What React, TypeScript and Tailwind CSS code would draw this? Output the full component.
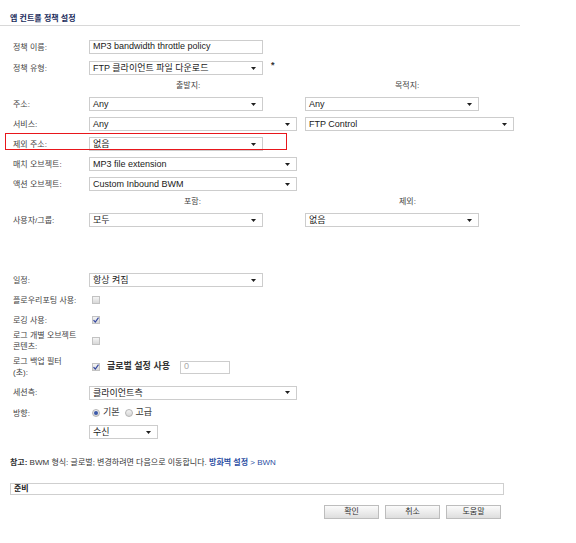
import React from 'react';

const FONT = "font-['Liberation_Sans','Noto_Sans_CJK_KR',sans-serif]";

function Arrow() {
    return (
        <svg width="5" height="3" viewBox="0 0 5 3" className="shrink-0">
            <path d="M0 0h5L2.5 3z" fill="#1f1f1f" />
        </svg>
    );
}

function Select({ value, w }: { value: string; w: string }) {
    return (
        <div className={`${w} h-[14px] shrink-0 border border-[#cdcdcd] bg-white flex items-center justify-between pl-[3px] pr-[6px]`}>
            <span className="text-[9px] leading-[12px] text-[#1a1a1a] whitespace-nowrap">{value}</span>
            <Arrow />
        </div>
    );
}

function Check({ on }: { on?: boolean }) {
    return (
        <div className="ml-[3px] w-[8px] h-[8px] shrink-0 border border-[#c2c2c2] bg-gradient-to-b from-[#f5f5f5] to-[#d8d8d8] flex items-center justify-center">
            {on && (
                <svg width="6" height="6" viewBox="0 0 6 6">
                    <path d="M0.5 3.2L2.3 5L5.5 0.6" stroke="#3548a0" strokeWidth="1.2" fill="none" />
                </svg>
            )}
        </div>
    );
}

function Radio({ on }: { on?: boolean }) {
    return (
        <div className="w-[8px] h-[8px] shrink-0 rounded-full border border-[#b5b5b5] bg-gradient-to-b from-[#f4f4f4] to-[#d6d6d6] flex items-center justify-center">
            {on && <div className="w-[4px] h-[4px] rounded-full bg-[#3a58a8]" />}
        </div>
    );
}

function Row({ label, h = 'h-[20px]', children, className = '' }: { label?: React.ReactNode; h?: string; children?: React.ReactNode; className?: string }) {
    return (
        <div className={`flex items-center ${h} ${className}`}>
            <div className="w-[76px] shrink-0 text-[8px] leading-[11px] text-[#444]">{label}</div>
            {children}
        </div>
    );
}

function Btn({ label }: { label: string }) {
    return (
        <div className="w-[55px] h-[14px] border border-[#bdbdbd] bg-gradient-to-b from-[#fbfbfb] to-[#dedede] flex items-center justify-center text-[8px] text-[#333]">
            {label}
        </div>
    );
}

export default function App() {
    return (
        <div className={`w-[576px] h-[543px] bg-white text-[#222] ${FONT}`}>
            {/* Header */}
            <div className="h-[24px] pl-[10px] pt-[13px] text-[8px] leading-[11px] font-bold text-[#1a2c5c]">앱 컨트롤 정책 설정</div>
            <div className="h-px w-[520px] mt-px bg-[#d8d8d8]" />

            <div className="pl-[13px] pt-[11px]">
                <Row label="정책 이름:">
                    <div className="w-[174px] h-[14px] border border-[#cdcdcd] flex items-center pl-[3px] text-[9px] text-[#1a1a1a]">
                        MP3 bandwidth throttle policy
                    </div>
                </Row>
                <Row label="정책 유형:" className="mt-px">
                    <Select w="w-[174px]" value="FTP 클라이언트 파일 다운로드" />
                    <span className="ml-[8px] self-start mt-[3px] text-[9px] leading-[9px] font-bold text-[#333]">*</span>
                </Row>

                <div className="flex items-center h-[16px] text-[8px] text-[#444]">
                    <div className="w-[76px] shrink-0" />
                    <div className="w-[216px] shrink-0 pl-[87px]">출발지:</div>
                    <div className="pl-[90px]">목적지:</div>
                </div>
                <Row label="주소:">
                    <div className="w-[216px] shrink-0">
                        <Select w="w-[174px]" value="Any" />
                    </div>
                    <Select w="w-[174px]" value="Any" />
                </Row>
                <Row label="서비스:">
                    <div className="w-[216px] shrink-0">
                        <Select w="w-[208px]" value="Any" />
                    </div>
                    <Select w="w-[209px]" value="FTP Control" />
                </Row>
                <Row label="제외 주소:" className="relative">
                    <Select w="w-[174px]" value="없음" />
                    <div className="absolute left-[-8px] top-[-1px] w-[282px] h-[17px] border border-[#e8161b]" />
                </Row>
                <Row label="매치 오브젝트:">
                    <Select w="w-[208px]" value="MP3 file extension" />
                </Row>
                <Row label="액션 오브젝트:">
                    <Select w="w-[208px]" value="Custom Inbound BWM" />
                </Row>

                <div className="flex items-center h-[16px] text-[8px] text-[#444]">
                    <div className="w-[76px] shrink-0" />
                    <div className="w-[216px] shrink-0 pl-[95px]">포함:</div>
                    <div className="pl-[94px]">제외:</div>
                </div>
                <Row label="사용자/그룹:">
                    <div className="w-[216px] shrink-0">
                        <Select w="w-[174px]" value="모두" />
                    </div>
                    <Select w="w-[174px]" value="없음" />
                </Row>

                <div className="h-[40px]" />

                <Row label="일정:">
                    <Select w="w-[174px]" value="항상 켜짐" />
                </Row>
                <Row label="플로우리포팅 사용:">
                    <Check />
                </Row>
                <Row label="로깅 사용:">
                    <Check on />
                </Row>
                <Row label={<>로그 개별 오브젝트<br />콘텐츠:</>} h="h-[22px]">
                    <Check />
                </Row>
                <Row label={<>로그 백업 필터<br />(초):</>} h="h-[30px]">
                    <Check on />
                    <span className="ml-[7px] text-[9px] font-bold text-[#333]">글로벌 설정 사용</span>
                    <div className="ml-[10px] w-[50px] h-[13px] border border-[#cdcdcd] flex items-center pl-[3px] text-[9px] text-[#aaa]">0</div>
                </Row>
                <Row label="세션측:" h="h-[21px]">
                    <Select w="w-[208px]" value="클라이언트측" />
                </Row>
                <Row label="방향:">
                    <div className="ml-[3px] flex items-center text-[9px] text-[#333]">
                        <Radio on />
                        <span className="ml-[3px]">기본</span>
                        <div className="ml-[5px]"><Radio /></div>
                        <span className="ml-[3px]">고급</span>
                    </div>
                </Row>
                <Row h="h-[18px]">
                    <Select w="w-[69px]" value="수신" />
                </Row>
            </div>

            {/* Note */}
            <div className="mt-[16px] pl-[10px] h-[12px] leading-[12px] text-[8px] text-[#333] whitespace-nowrap">
                <span className="font-bold">참고:</span> BWM 형식: 글로벌; 변경하려면 다음으로 이동합니다.{' '}
                <span className="text-[#2d4fa3] font-bold">방화벽 설정</span>
                <span className="text-[#2d4fa3]"> &gt; BWN</span>
            </div>

            {/* Status bar */}
            <div className="mt-[14px] ml-[10px] w-[494px] h-[12px] border border-[#cfcfcf] flex items-center pl-[3px] text-[8px] font-bold text-[#222]">
                준비
            </div>

            {/* Buttons */}
            <div className="mt-[10px] w-[501px] flex justify-end gap-[6px]">
                <Btn label="확인" />
                <Btn label="취소" />
                <Btn label="도움말" />
            </div>
        </div>
    );
}
